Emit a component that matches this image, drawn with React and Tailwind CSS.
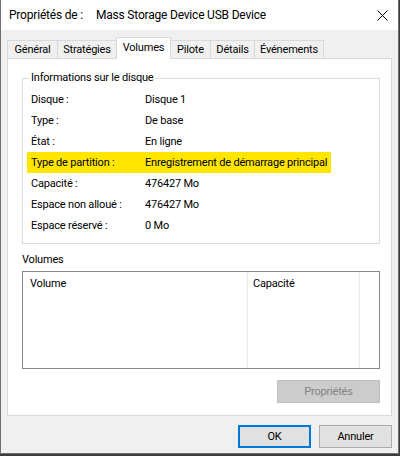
import React from 'react';

const tabs = [
  { label: 'Général', cls: 'w-[50px] border-l border-t' },
  { label: 'Stratégies', cls: 'w-[59px] border-l border-t' },
  { label: 'Volumes', active: true, cls: 'w-[55px] border-l border-t border-r' },
  { label: 'Pilote', cls: 'w-[39px] border-t' },
  { label: 'Détails', cls: 'w-[44px] border-l border-t' },
  { label: 'Événements', cls: 'w-[70px] border-l border-t border-r' },
];

const infos = [
  ['Disque :', 'Disque 1'],
  ['Type :', 'De base'],
  ['État :', 'En ligne'],
  ['Type de partition :', 'Enregistrement de démarrage principal', true],
  ['Capacité :', '476427 Mo'],
  ['Espace non alloué :', '476427 Mo'],
  ['Espace réservé :', '0 Mo'],
];

const App = () => {
  return (
    <div className="w-[400px] h-[456px] bg-[#3c3c3c] [font-family:Roboto,sans-serif] text-[11px] tracking-[-0.2px] text-black leading-[14px]">
      <div className="w-[399px] h-[454px] border-x border-b border-[#707070] bg-[#f0f0f0] flex flex-col">
        {/* Title bar */}
        <div className="h-[30px] bg-white flex items-center pl-[8px] pr-[8px] shrink-0">
          <span className="w-[87px] text-[12px]">Propriétés de :</span>
          <span className="text-[12px]">Mass Storage Device USB Device</span>
          <svg className="ml-auto mr-[2px]" width="11" height="11" viewBox="0 0 11 11">
            <path d="M0.5 0.5 L10.5 10.5 M10.5 0.5 L0.5 10.5" stroke="#000" strokeWidth="1" fill="none" />
          </svg>
        </div>

        {/* Tabs */}
        <div className="pt-[7px] ml-[6px] flex items-end h-[28px] shrink-0">
          {tabs.map(t => (
            <div
              key={t.label}
              className={`${t.cls} border-[#d9d9d9] flex items-center justify-center ${t.active ? 'h-[22px] bg-white relative z-10 -mb-px pb-[2px]' : 'h-[18px] bg-[#f0f0f0]'}`}
            >
              {t.label}
            </div>
          ))}
        </div>

        {/* Tab panel */}
        <div className="ml-[6px] w-[385px] h-[358px] border border-[#d9d9d9] bg-white flex flex-col shrink-0">
          <fieldset className="ml-[14px] mt-[12px] w-[358px] border border-[#dcdcdc] pt-[4px] pb-[7px]">
            <legend className="ml-[6px] px-[2px] leading-[14px]">Informations sur le disque</legend>
            {infos.map(([label, value, hl]) => (
              <div
                key={label}
                className={`ml-[4px] w-[304px] h-[21px] flex items-center pl-[4px] ${hl ? 'bg-[#ffe600]' : ''}`}
              >
                <span className="w-[114px] shrink-0">{label}</span>
                <span className="whitespace-nowrap">{value}</span>
              </div>
            ))}
          </fieldset>

          <div className="ml-[14px] mt-[9px]">Volumes</div>

          <div className="ml-[14px] mt-[4px] w-[358px] h-[98px] border border-[#828790] flex">
            <div className="w-[225px] border-r border-[#e8e8e8]">
              <div className="h-[24px] flex items-center pl-[7px]">Volume</div>
            </div>
            <div className="w-[112px] border-r border-[#e8e8e8]">
              <div className="h-[24px] flex items-center pl-[5px]">Capacité</div>
            </div>
            <div className="flex-1" />
          </div>

          <div className="ml-[14px] mt-[11px] w-[358px] flex justify-end">
            <button className="w-[103px] h-[23px] border border-[#bfbfbf] bg-[#cccccc] text-[#838383]">
              Propriétés
            </button>
          </div>
        </div>

        {/* Dialog buttons */}
        <div className="mt-[9px] pr-[6px] flex justify-end gap-[8px]">
          <button className="w-[73px] h-[23px] border-2 border-[#0078d7] bg-[#e1e1e1]">OK</button>
          <button className="w-[73px] h-[23px] border border-[#adadad] bg-[#e1e1e1]">Annuler</button>
        </div>
      </div>
    </div>
  );
};

export default App;
